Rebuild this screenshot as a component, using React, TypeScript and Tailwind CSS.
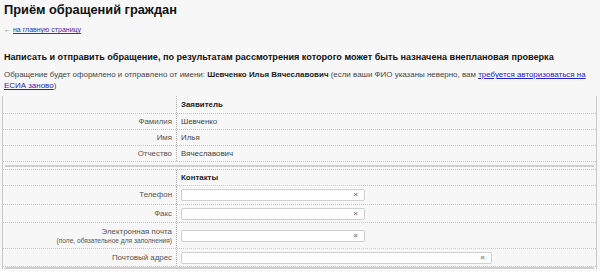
import React from "react";

const Row = ({ label, sub, children, h, header }: { label?: string; sub?: string; children?: React.ReactNode; h: string; header?: boolean }) => (
  <div className={`grid grid-cols-[174px_1fr] border-b border-dotted border-[#c8c8c8] ${h}`}>
    <div className="flex flex-col items-end justify-center pr-[4px] border-r border-dotted border-[#b0b0b0] text-[#555]">
      {label && <span className="leading-[10px]">{label}</span>}
      {sub && <span className="text-[6.6px] leading-[8px] text-[#555]">{sub}</span>}
    </div>
    <div className={`flex items-center pl-[4px] ${header ? "font-bold text-[#222]" : "text-[#444]"}`}>{children}</div>
  </div>
);

const Input = ({ w }: { w: string }) => (
  <div className={`${w} h-[12px] bg-white border border-[#cfcfcf] rounded-[2px] flex items-center justify-end pr-[6px]`}>
    <span className="text-[8px] leading-none font-bold text-[#888]">×</span>
  </div>
);

export default function App() {
  return (
    <div className="w-[600px] h-[271px] overflow-hidden bg-[#f7f7f7] text-[#222]" style={{ fontFamily: '"Liberation Sans", Arial, sans-serif' }}>
      <div className="px-[4px] pt-[2px]">
        <h1 className="text-[12.8px] font-bold leading-[16px] text-[#111]">Приём обращений граждан</h1>
        <div className="mt-[7px] text-[7px] leading-[10px] text-[#555]">
          ← <a className="text-[#33a] underline">на главную страницу</a>
        </div>
        <h2 className="mt-[16px] text-[9.1px] font-bold leading-[12px] text-[#111]">
          Написать и отправить обращение, по результатам рассмотрения которого может быть назначена внеплановая проверка
        </h2>
        <p className="mt-[6px] text-[7.95px] leading-[11px] text-[#444]">
          Обращение будет оформлено и отправлено от имени: <b className="text-[#222] leading-[11px]">Шевченко Илья Вячеславович</b> (если ваши ФИО указаны неверно, вам{" "}
          <a className="text-[#22c] underline leading-[11px]">требуется авторизоваться на ЕСИА заново</a>)
        </p>
      </div>
      <div className="mx-[2px] mt-[5px] w-[595px] border-l border-r border-[#c8c8c8] text-[7.9px]">
        <Row h="h-[18px]" header>Заявитель</Row>
        <Row h="h-[16px]" label="Фамилия">Шевченко</Row>
        <Row h="h-[16px]" label="Имя">Илья</Row>
        <Row h="h-[16px]" label="Отчество">Вячеславович</Row>
        <div className="h-[8px] border-b border-dotted border-[#c8c8c8] flex flex-col">
          <div className="h-[3px]" />
          <div className="mx-[2px] border-t-2 border-[#cfcfcf]" />
        </div>
        <Row h="h-[16px]" header>Контакты</Row>
        <Row h="h-[19px]" label="Телефон"><Input w="w-[184px]" /></Row>
        <Row h="h-[18px]" label="Факс"><Input w="w-[184px]" /></Row>
        <Row h="h-[26px]" label="Электронная почта" sub="(поле, обязательное для заполнения)"><Input w="w-[184px]" /></Row>
        <Row h="h-[18px]" label="Почтовый адрес"><Input w="w-[311px]" /></Row>
        <div className="mx-[2px] border-t-2 border-[#cfcfcf]" />
      </div>
    </div>
  );
}
